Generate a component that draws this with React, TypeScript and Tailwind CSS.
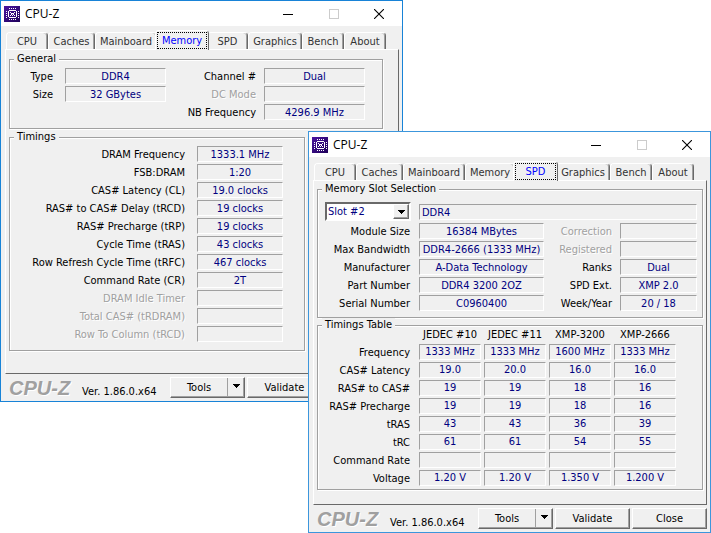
import type { ReactNode } from "react";

const TABS = [
  { name: "CPU", width: "w-[42px]", active: "w-[46px]" },
  { name: "Caches", width: "w-[47px]", active: "w-[51px]" },
  { name: "Mainboard", width: "w-[62px]", active: "w-[66px]" },
  { name: "Memory", width: "w-[50px]", active: "w-[54px]" },
  { name: "SPD", width: "w-[41px]", active: "w-[45px]" },
  { name: "Graphics", width: "w-[54px]", active: "w-[58px]" },
  { name: "Bench", width: "w-[42px]", active: "w-[46px]" },
  { name: "About", width: "w-[42px]", active: "w-[46px]" },
];

const TIMINGS: [string, string][] = [
  ["DRAM Frequency", "1333.1 MHz"],
  ["FSB:DRAM", "1:20"],
  ["CAS# Latency (CL)", "19.0 clocks"],
  ["RAS# to CAS# Delay (tRCD)", "19 clocks"],
  ["RAS# Precharge (tRP)", "19 clocks"],
  ["Cycle Time (tRAS)", "43 clocks"],
  ["Row Refresh Cycle Time (tRFC)", "467 clocks"],
  ["Command Rate (CR)", "2T"],
  ["DRAM Idle Timer", ""],
  ["Total CAS# (tRDRAM)", ""],
  ["Row To Column (tRCD)", ""],
];

const MODULE: [string, string][] = [
  ["Module Size", "16384 MBytes"],
  ["Max Bandwidth", "DDR4-2666 (1333 MHz)"],
  ["Manufacturer", "A-Data Technology"],
  ["Part Number", "DDR4 3200 2OZ"],
  ["Serial Number", "C0960400"],
];

const MODULE_EXTRA: [string, string][] = [
  ["Correction", ""],
  ["Registered", ""],
  ["Ranks", "Dual"],
  ["SPD Ext.", "XMP 2.0"],
  ["Week/Year", "20 / 18"],
];

const PROFILES = ["JEDEC #10", "JEDEC #11", "XMP-3200", "XMP-2666"];

const PROFILE_ROWS: [string, string[]][] = [
  ["Frequency", ["1333 MHz", "1333 MHz", "1600 MHz", "1333 MHz"]],
  ["CAS# Latency", ["19.0", "20.0", "16.0", "16.0"]],
  ["RAS# to CAS#", ["19", "19", "18", "16"]],
  ["RAS# Precharge", ["19", "19", "18", "16"]],
  ["tRAS", ["43", "43", "36", "39"]],
  ["tRC", ["61", "61", "54", "55"]],
  ["Command Rate", ["", "", "", ""]],
  ["Voltage", ["1.20 V", "1.20 V", "1.350 V", "1.200 V"]],
];

const SUNKEN = "border border-t-[#a0a0a0] border-l-[#a0a0a0] border-r-white border-b-white";
const RAISED =
  "border border-t-white border-l-white border-r-[#696969] border-b-[#696969] shadow-[inset_-1px_-1px_0_#a0a0a0]";

function ChipIcon() {
  return (
    <svg width="16" height="16" viewBox="0 0 16 16" shapeRendering="crispEdges" aria-hidden="true">
      <defs>
        <linearGradient id="chip" x1="0" y1="0" x2="1" y2="1">
          <stop offset="0" stopColor="#4a14a0" />
          <stop offset="1" stopColor="#1e0058" />
        </linearGradient>
      </defs>
      <rect width="16" height="16" fill="url(#chip)" />
      <g fill="none" stroke="#fff">
        <path d="M5 2.5h1M7 2.5h1M9 2.5h1M11 2.5h1M5 13.5h1M7 13.5h1M9 13.5h1M11 13.5h1" />
        <path d="M2 5.5h1M2 7.5h1M2 9.5h1M2 11.5h1M14 5.5h1M14 7.5h1M14 9.5h1M14 11.5h1" />
        <path d="M5 4.5h7M5 11.5h7M4.5 5v6M12.5 5v6" />
        <path d="M6 6.5h1M10 6.5h1M7 7.5h3M7 8.5h1M9 8.5h1M6 9.5h1M8 9.5h1M10 9.5h1" />
      </g>
    </svg>
  );
}

function DownArrow() {
  return (
    <svg width="7" height="4" shapeRendering="crispEdges" aria-hidden="true">
      <path d="M0 0h7v1H6v1H5v1H4v1H3V3H2V2H1V1H0z" />
    </svg>
  );
}

function Field({ id, label, value, labelWidth, fieldWidth, disabled }: {
  id: string;
  label: string;
  value: string;
  labelWidth: string;
  fieldWidth: string;
  disabled?: boolean;
}) {
  return (
    <div className="flex h-4 items-center">
      <label
        htmlFor={id}
        className={`${labelWidth} shrink-0 pt-0.5 text-right whitespace-nowrap ${
          disabled ? "text-[#a0a0a0] [text-shadow:1px_1px_0_#fff]" : "text-black"
        }`}
      >
        {label}
      </label>
      <input
        id={id}
        readOnly
        value={value}
        className={`${fieldWidth} h-4 min-w-0 text-center text-[#000080] outline-none ${SUNKEN}`}
      />
    </div>
  );
}

function Group({ title, className, children }: { title: string; className: string; children: ReactNode }) {
  return (
    <fieldset
      className={`border border-[#a0a0a0] shadow-[1px_1px_0_#fff,inset_1px_1px_0_#fff] ${className}`}
    >
      <legend className="ml-1 bg-[#f0f0f0] px-[3px] leading-[14px]">{title}</legend>
      {children}
    </fieldset>
  );
}

function Window({ active, className, frame, closable, children }: {
  active: string;
  className: string;
  frame: string;
  closable?: boolean;
  children: ReactNode;
}) {
  return (
    <section
      className={`w-[403px] border bg-[#f0f0f0] font-['DejaVu_Sans_Condensed','Noto_Sans',sans-serif] text-[11px] leading-[14px] text-black ${frame} ${className}`}
    >
      <header className="flex h-[25px] items-center bg-white pl-[3px]">
        <ChipIcon />
        <h1 className="ml-[5px] flex-1 font-['Open_Sans',sans-serif] text-xs">CPU-Z</h1>
        <button type="button" aria-label="Minimize" className="flex h-full w-[46px] items-center justify-center">
          <svg width="10" height="10" shapeRendering="crispEdges">
            <path d="M0 5.5h10" stroke="#000" />
          </svg>
        </button>
        <button type="button" aria-label="Maximize" disabled className="flex h-full w-[45px] items-center justify-center">
          <svg width="10" height="10" fill="none" shapeRendering="crispEdges">
            <path d="M.5.5h9v9h-9z" stroke="#ccc" />
          </svg>
        </button>
        <button type="button" aria-label="Close window" className="flex h-full w-[46px] items-center justify-center">
          <svg width="10" height="10">
            <path d="M0 0l10 10M10 0L0 10" stroke="#000" strokeWidth="1.1" />
          </svg>
        </button>
      </header>

      <div role="tablist" className="flex h-[23px] items-end pl-[5px]">
        {TABS.map((tab) =>
          tab.name === active ? (
            <button
              key={tab.name}
              type="button"
              role="tab"
              aria-selected="true"
              className={`relative z-10 -mx-0.5 -mb-px h-5 shrink-0 rounded-t-sm border border-b-0 border-t-white border-l-white border-r-[#696969] bg-[#f0f0f0] p-px text-[#0000ff] ${tab.active}`}
            >
              <span className="block h-full border border-dotted border-black leading-[15px]">{tab.name}</span>
            </button>
          ) : (
            <button
              key={tab.name}
              type="button"
              role="tab"
              aria-selected="false"
              className={`h-[17px] shrink-0 rounded-t-sm border border-b-0 border-t-white border-l-white border-r-[#696969] pt-px text-[#333] shadow-[inset_-1px_0_0_#a0a0a0] ${tab.width}`}
            >
              {tab.name}
            </button>
          ),
        )}
      </div>

      <div
        role="tabpanel"
        className="mr-[3px] ml-1 min-h-[325px] border border-t-white border-r-[#696969] border-b-[#696969] border-l-white pl-[3px]"
      >
        {children}
      </div>

      <footer className="flex h-[27px] items-center gap-0.5 pr-[3px] pl-2">
        <span className="font-['Liberation_Sans',sans-serif] text-xl leading-6 font-bold text-[#a0a0a0] italic [text-shadow:1px_1px_0_#fff]">
          CPU-Z
        </span>
        <span className="ml-2.5 flex-1 pt-2 whitespace-nowrap">Ver. 1.86.0.x64</span>
        <div className={`flex h-[21px] w-[75px] ${RAISED}`}>
          <button type="button" className="flex-1 border-r border-[#a0a0a0]">Tools</button>
          <button type="button" aria-label="More tools" className="flex w-4 items-center justify-center pb-1">
            <DownArrow />
          </button>
        </div>
        <button type="button" className={`h-[21px] w-[75px] ${RAISED}`}>Validate</button>
        {closable ? (
          <button type="button" className={`h-[21px] w-[75px] ${RAISED}`}>Close</button>
        ) : (
          <div className="w-[75px]" />
        )}
      </footer>
    </section>
  );
}

function MemoryPanel() {
  return (
    <div className="pt-0.5">
      <Group title="General" className="mr-[15px] flex justify-between pt-0.5 pr-[17px] pb-2">
        <div className="flex flex-col gap-0.5">
          <Field id="type" label="Type" value="DDR4" labelWidth="w-[43px] mr-3" fieldWidth="w-[101px]" />
          <Field id="size" label="Size" value="32 GBytes" labelWidth="w-[43px] mr-3" fieldWidth="w-[101px]" />
        </div>
        <div className="flex flex-col gap-0.5">
          <Field id="channel" label="Channel #" value="Dual" labelWidth="w-[80px] mr-2" fieldWidth="w-[101px]" />
          <Field id="dc" label="DC Mode" value="" labelWidth="w-[80px] mr-2" fieldWidth="w-[101px]" disabled />
          <Field id="nb" label="NB Frequency" value="4296.9 MHz" labelWidth="w-[80px] mr-2" fieldWidth="w-[101px]" />
        </div>
      </Group>
      <Group title="Timings" className="mt-px mr-[93px] flex flex-col gap-0.5 pt-0.5 pb-2">
        {TIMINGS.map(([label, value]) => (
          <Field
            key={label}
            id={label}
            label={label}
            value={value}
            labelWidth="w-[175px] mr-3"
            fieldWidth="w-[86px]"
            disabled={!value}
          />
        ))}
      </Group>
    </div>
  );
}

function SpdPanel() {
  return (
    <div className="pt-px pr-[3px]">
      <Group title="Memory Slot Selection" className="pt-1.5 pb-1.5">
        <div className="flex gap-2 pr-[5px] pl-[7px]">
          <div className="relative w-[86px]">
            <select
              aria-label="Memory slot"
              className="block h-[19px] w-full appearance-none border-2 border-t-[#696969] border-r-white border-b-white border-l-[#696969] bg-white pl-px text-[#000080]"
            >
              <option>Slot #2</option>
            </select>
            <span className={`pointer-events-none absolute top-0.5 right-0.5 flex h-[15px] w-4 items-center justify-center bg-[#f0f0f0] ${RAISED}`}>
              <DownArrow />
            </span>
          </div>
          <input
            aria-label="Memory type"
            readOnly
            value="DDR4"
            className={`mt-0.5 h-4 min-w-0 flex-1 pl-0.5 text-[#000080] outline-none ${SUNKEN}`}
          />
        </div>
        <div className="mt-0.5 flex justify-between pr-[5px] pl-[7px]">
          <div className="flex flex-col gap-0.5">
            {MODULE.map(([label, value]) => (
              <Field
                key={label}
                id={label}
                label={label}
                value={value}
                labelWidth="w-[85px] mr-[9px]"
                fieldWidth="w-[125px]"
              />
            ))}
          </div>
          <div className="flex flex-col gap-0.5">
            {MODULE_EXTRA.map(([label, value]) => (
              <Field
                key={label}
                id={label}
                label={label}
                value={value}
                labelWidth="w-[60px] mr-2"
                fieldWidth="w-[77px]"
                disabled={!value}
              />
            ))}
          </div>
        </div>
      </Group>
      <Group title="Timings Table" className="pb-px">
        <table className="-mt-1.5 border-separate border-spacing-x-[3px] border-spacing-y-[2px] text-center">
          <thead>
            <tr className="h-[14px]">
              <td className="w-[95px] p-0" />
              {PROFILES.map((name) => (
                <th key={name} scope="col" className="w-[62px] p-0 font-normal whitespace-nowrap">
                  {name}
                </th>
              ))}
            </tr>
          </thead>
          <tbody>
            {PROFILE_ROWS.map(([label, values]) => (
              <tr key={label} className="h-4">
                <th scope="row" className="p-0 pt-0.5 pr-1.5 text-right font-normal whitespace-nowrap">
                  {label}
                </th>
                {values.map((value, i) => (
                  <td key={i} className={`p-0 text-[#000080] ${SUNKEN}`}>
                    {value}
                  </td>
                ))}
              </tr>
            ))}
          </tbody>
        </table>
      </Group>
    </div>
  );
}

export default function App() {
  return (
    <main className="relative min-h-screen bg-white">
      <Window active="Memory" className="absolute top-0 left-0" frame="border-[#1883d7]">
        <MemoryPanel />
      </Window>
      <Window active="SPD" className="absolute top-[131px] left-[308px]" frame="border-[#3c96dc]" closable>
        <SpdPanel />
      </Window>
    </main>
  );
}
